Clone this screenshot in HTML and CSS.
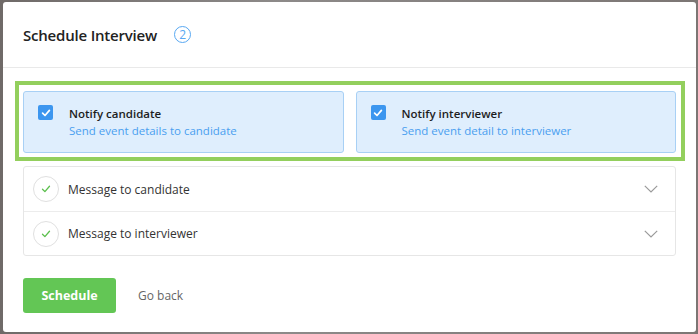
FILE: index.html
```html
<html lang="en">
<head>
    <meta charset="UTF-8">
    <title>Schedule Interview</title>
    <link rel="stylesheet" href="styles.css">
</head>
<body>

  <div class="modal">
    <header class="modal-head">
      <h2 class="modal-title">Schedule Interview</h2>
      <span class="step">2</span>
    </header>

    <div class="modal-body">
      <div class="highlight">
        <label class="notify-card">
          <span class="checkbox">
            <svg width="10" height="10" viewBox="0 0 10 10"><path d="M1.6 5.2 L4 7.5 L8.4 2.4" fill="none" stroke="#fff" stroke-width="1.7" stroke-linecap="round" stroke-linejoin="round"/></svg>
          </span>
          <span class="notify-text">
            <span class="notify-title">Notify candidate</span>
            <span class="notify-sub">Send event details to candidate</span>
          </span>
        </label>
        <label class="notify-card">
          <span class="checkbox">
            <svg width="10" height="10" viewBox="0 0 10 10"><path d="M1.6 5.2 L4 7.5 L8.4 2.4" fill="none" stroke="#fff" stroke-width="1.7" stroke-linecap="round" stroke-linejoin="round"/></svg>
          </span>
          <span class="notify-text">
            <span class="notify-title">Notify interviewer</span>
            <span class="notify-sub">Send event detail to interviewer</span>
          </span>
        </label>
      </div>

      <ul class="messages">
        <li class="message-row">
          <span class="done">
            <svg width="10" height="10" viewBox="0 0 10 10"><path d="M1.5 5.3 L3.9 7.6 L8.5 2.3" fill="none" stroke="#5bbf4d" stroke-width="1.3" stroke-linecap="round" stroke-linejoin="round"/></svg>
          </span>
          <span class="message-label">Message to candidate</span>
          <svg class="chevron" width="14" height="8" viewBox="0 0 14 8"><path d="M0.8 0.8 L7 7 L13.2 0.8" fill="none" stroke="#9a9a9a" stroke-width="1.2"/></svg>
        </li>
        <li class="message-row">
          <span class="done">
            <svg width="10" height="10" viewBox="0 0 10 10"><path d="M1.5 5.3 L3.9 7.6 L8.5 2.3" fill="none" stroke="#5bbf4d" stroke-width="1.3" stroke-linecap="round" stroke-linejoin="round"/></svg>
          </span>
          <span class="message-label">Message to interviewer</span>
          <svg class="chevron" width="14" height="8" viewBox="0 0 14 8"><path d="M0.8 0.8 L7 7 L13.2 0.8" fill="none" stroke="#9a9a9a" stroke-width="1.2"/></svg>
        </li>
      </ul>

      <div class="actions">
        <button type="button" class="btn-schedule">Schedule</button>
        <a class="go-back">Go back</a>
      </div>
    </div>
  </div>

</body>
</html>
```

FILE: styles.css
```css
* {
	box-sizing: border-box;
}
body {
	margin: 0;
	padding: 2px 2px 2px 3px;
	background: linear-gradient(90deg, #6f6a68 0%, #8d8a89 40%, #7c7674 100%);
	font-family: "Open Sans", "Liberation Sans", sans-serif;
	height: 334px;
	overflow: hidden;
}
.modal {
	width: 693px;
	height: 330px;
	background: #fff;
	border-radius: 3px;
}
.modal-head {
	height: 66px;
	display: flex;
	align-items: center;
	padding: 0 20px;
	border-bottom: 1px solid #e9e9e9;
}
.modal-title {
	margin: 0;
	font-size: 15px;
	font-weight: 600;
	color: #222;
	letter-spacing: -0.2px;
}
.step {
	margin-left: 17px;
	width: 17px;
	height: 17px;
	border: 1px solid #58a8f2;
	border-radius: 50%;
	color: #58a8f2;
	font-size: 12px;
	line-height: 15px;
	text-align: center;
}

.modal-body {
	padding: 13px 20px 20px 20px;
}
.highlight {
	display: flex;
	gap: 12px;
	margin: 0 -9px 0 -8px;
	padding: 6px 5px 4px 4px;
	border: 4px solid #93cf5d;
}
.notify-card {
	flex: 1;
	height: 62px;
	display: flex;
	align-items: flex-start;
	gap: 16px;
	padding: 13px 14px;
	background: #dfeefd;
	border: 1px solid #a8d0f5;
	border-radius: 3px;
}
.checkbox {
	flex: 0 0 15px;
	height: 15px;
	display: flex;
	align-items: center;
	justify-content: center;
	background: #3c96ef;
	border-radius: 2px;
}
.notify-text {
	display: flex;
	flex-direction: column;
	margin-top: 0;
}
.notify-title {
	font-size: 11.5px;
	font-weight: 600;
	line-height: 17px;
	color: #1d1d1d;
}
.notify-sub {
	font-size: 11.5px;
	line-height: 17px;
	color: #4a9ff0;
}

.messages {
	list-style: none;
	margin: 5px 0 0 0;
	padding: 0;
	border: 1px solid #e6e6e6;
	border-radius: 3px;
}
.message-row {
	height: 44px;
	display: flex;
	align-items: center;
	padding: 0 17px 0 9px;
}
.message-row + .message-row {
	border-top: 1px solid #ececec;
}
.done {
	width: 26px;
	height: 26px;
	display: flex;
	align-items: center;
	justify-content: center;
	border: 1px solid #e0e0e0;
	border-radius: 50%;
	margin-right: 9px;
}
.message-label {
	flex: 1;
	font-size: 12px;
	color: #333;
}

.actions {
	display: flex;
	align-items: center;
	margin-top: 22px;
}
.btn-schedule {
	width: 93px;
	height: 35px;
	border: none;
	border-radius: 3px;
	background: #63c655;
	color: #fff;
	font-family: inherit;
	font-size: 12.5px;
	font-weight: 700;
}
.go-back {
	margin-left: 22px;
	font-size: 12px;
	color: #666;
}
```
